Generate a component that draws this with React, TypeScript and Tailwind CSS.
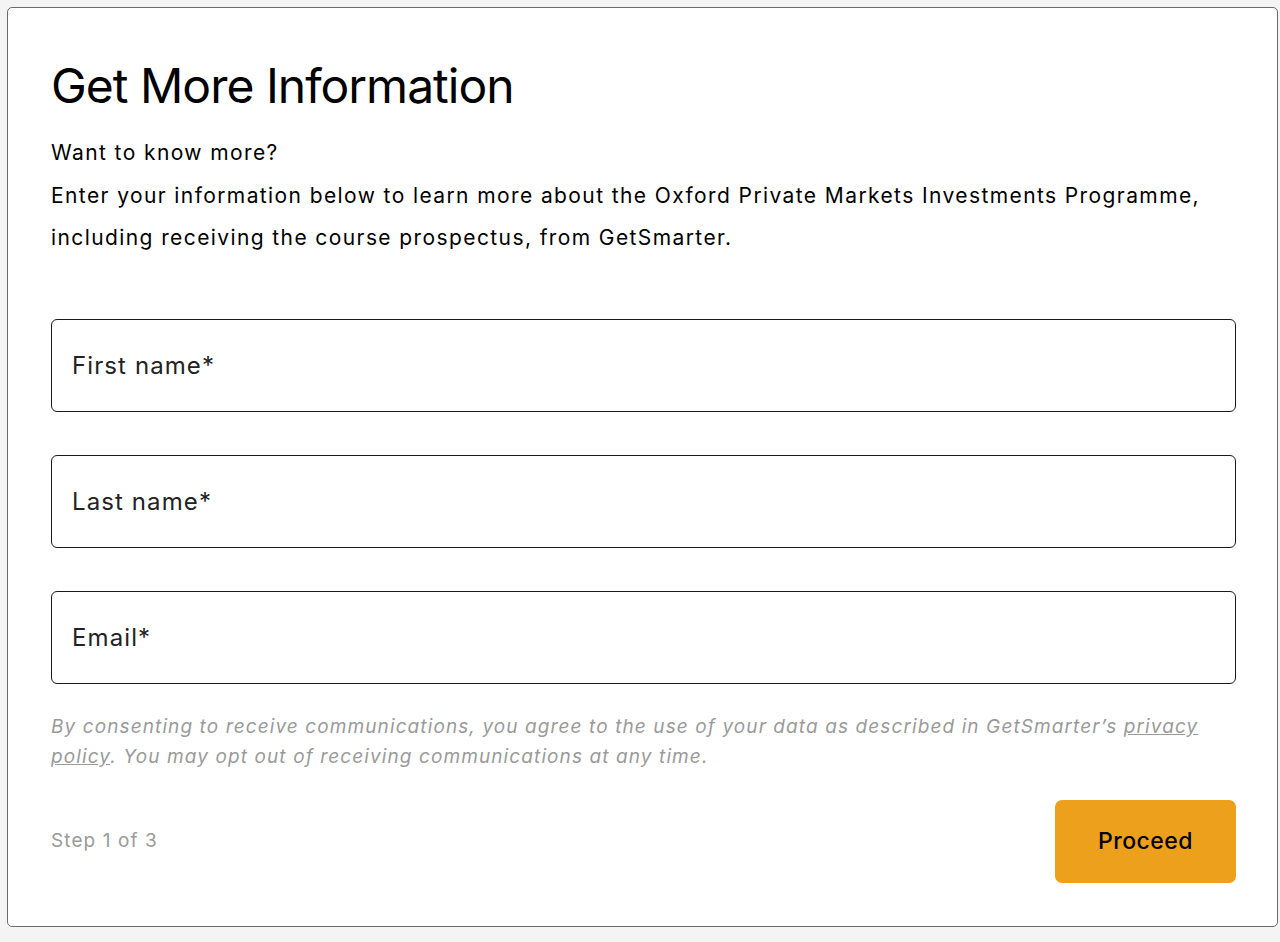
import React from "react";

const fields = ["First name*", "Last name*", "Email*"];

const App: React.FC = () => (
  <div className="min-h-[942px] bg-[#f4f4f4] pt-[7px] pl-[7px] pr-[2px] pb-[15px] font-['Inter',sans-serif]">
    <div className="bg-white border border-[#6b6b6b] rounded-[5px] pl-[43px] pr-[41px] pt-[50px] pb-[43px]">
      <h1 className="text-[48px] leading-[56px] text-black tracking-[-1px]">
        Get More Information
      </h1>
      <div className="mt-[23px] text-[21px] text-black tracking-[1.4px]">
        <p className="leading-[32px] mb-[6px]">Want to know more?</p>
        <p className="leading-[42px]">
          Enter your information below to learn more about the Oxford Private Markets Investments Programme,
          including receiving the course prospectus, from GetSmarter.
        </p>
      </div>
      <form className="mt-[60px] flex flex-col gap-[43px]">
        {fields.map((f) => (
          <div
            key={f}
            className="h-[93px] border border-[#1a1a1a] rounded-[6px] flex items-center px-[20px] text-[24px] tracking-[1.1px] text-[#222]"
          >
            {f}
          </div>
        ))}
      </form>
      <p className="mt-[28px] text-[19px] leading-[30px] italic tracking-[1.1px] text-[#9a9a9a]">
        By consenting to receive communications, you agree to the use of your data as described in GetSmarter’s{" "}
        <span className="underline">privacy policy</span>. You may opt out of receiving communications at any time.
      </p>
      <div className="mt-[28px] flex items-center justify-between">
        <span className="text-[19px] tracking-[1.1px] text-[#9a9a9a]">Step 1 of 3</span>
        <button
          type="button"
          className="w-[181px] h-[83px] bg-[#eda01b] rounded-[7px] text-[23px] tracking-[0.5px] font-medium text-black"
        >
          Proceed
        </button>
      </div>
    </div>
  </div>
);

export default App;
